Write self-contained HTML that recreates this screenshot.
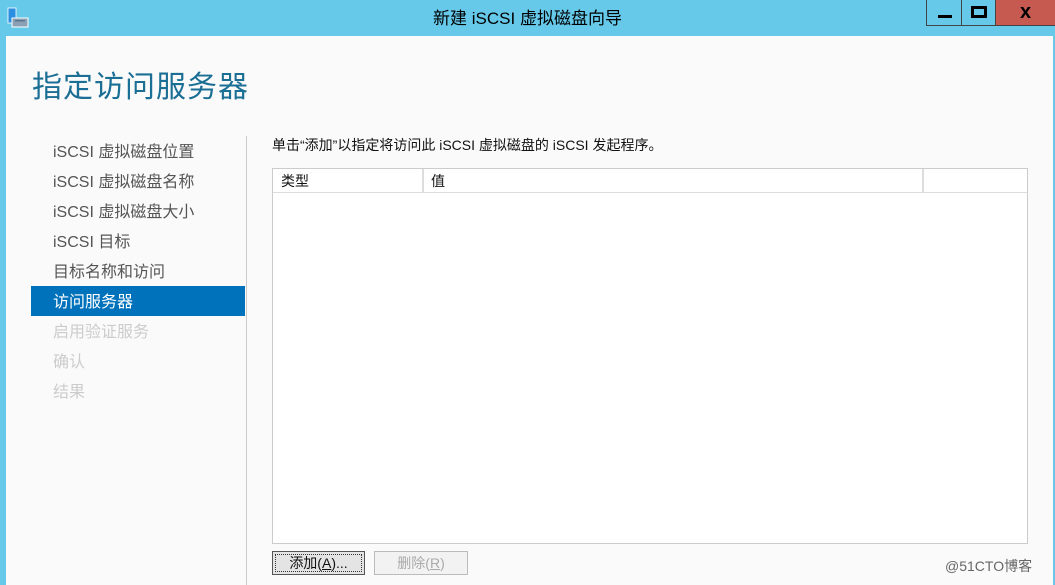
<!DOCTYPE html>
<html><head><meta charset="utf-8"><style>
*{margin:0;padding:0;box-sizing:border-box}
body{width:1055px;height:585px;background:#66c9ea;position:relative;overflow:hidden;font-family:"Liberation Sans","Noto Sans CJK SC",sans-serif}
.abs{position:absolute}
.title{left:0;width:1055px;top:4px;text-align:center;font-size:17px;color:#000}
.client{left:6px;top:36px;width:1047px;height:549px;background:#fafafa}
.nav{position:absolute;left:53px;font-size:16px;color:#555;white-space:nowrap}
.dis{color:#ccc}
</style></head><body>
<svg class="abs" style="left:7px;top:7px" width="22" height="22" viewBox="0 0 22 22">
<rect x="1" y="1" width="8" height="15" fill="#2a8fe0" stroke="#fff" stroke-width="0.8"/>
<rect x="5" y="11" width="16" height="9" fill="#8aa0b5" stroke="#fff" stroke-width="1"/>
<rect x="8" y="13" width="10" height="1.5" fill="#5f7488"/>
</svg>
<div class="abs title">新建 iSCSI 虚拟磁盘向导</div>
<div class="abs" style="left:926px;top:0;width:36px;height:26px;border:1px solid #444;border-top:none;background:#66c9ea"></div>
<div class="abs" style="left:938px;top:15px;width:14px;height:3px;background:#000"></div>
<div class="abs" style="left:962px;top:0;width:34px;height:26px;border:1px solid #444;border-top:none;border-left:none"></div>
<div class="abs" style="left:971px;top:6px;width:16px;height:12px;border:3px solid #000"></div>
<div class="abs" style="left:996px;top:0;width:59px;height:26px;background:#c75a50;border-bottom:1px solid #444"></div>
<div class="abs" style="left:996px;top:1px;width:59px;text-align:center;font-size:20px;font-weight:bold;color:#000">x</div>
<div class="abs client"></div>
<div class="abs" style="left:32px;top:62px;font-size:30px;color:#1b6e94;letter-spacing:1px">指定访问服务器</div>
<div class="abs" style="left:246px;top:136px;width:1px;height:449px;background:#ccc"></div>
<div class="abs" style="left:31px;top:286px;width:214px;height:30px;background:#0072bc"></div>
<div class="nav" style="top:138px">iSCSI 虚拟磁盘位置</div>
<div class="nav" style="top:168px">iSCSI 虚拟磁盘名称</div>
<div class="nav" style="top:198px">iSCSI 虚拟磁盘大小</div>
<div class="nav" style="top:228px">iSCSI 目标</div>
<div class="nav" style="top:258px">目标名称和访问</div>
<div class="nav" style="top:288px;color:#fff">访问服务器</div>
<div class="nav dis" style="top:318px">启用验证服务</div>
<div class="nav dis" style="top:348px">确认</div>
<div class="nav dis" style="top:378px">结果</div>
<div class="abs" style="left:272px;top:135px;font-size:14px;color:#111">单击“添加”以指定将访问此 iSCSI 虚拟磁盘的 iSCSI 发起程序。</div>
<div class="abs" style="left:272px;top:168px;width:756px;height:376px;background:#fff;border:1px solid #ccc"></div>
<div class="abs" style="left:273px;top:169px;width:754px;height:24px;border-bottom:1px solid #ddd"></div>
<div class="abs" style="left:422px;top:169px;width:2px;height:24px;background:#ddd"></div>
<div class="abs" style="left:922px;top:169px;width:2px;height:24px;background:#ddd"></div>
<div class="abs" style="left:281px;top:171px;font-size:14px;color:#111">类型</div>
<div class="abs" style="left:431px;top:171px;font-size:14px;color:#111">值</div>
<div class="abs" style="left:272px;top:551px;width:93px;height:24px;border:1px solid #555;background:#e4e4e4"></div>
<div class="abs" style="left:275px;top:554px;width:87px;height:18px;border:1px dotted #333"></div>
<div class="abs" style="left:272px;top:553px;width:93px;text-align:center;font-size:14px;color:#111">添加(<u>A</u>)...</div>
<div class="abs" style="left:374px;top:551px;width:94px;height:24px;border:1px solid #bbb;background:#f2f2f2"></div>
<div class="abs" style="left:374px;top:553px;width:94px;text-align:center;font-size:14px;color:#aaa">删除(<u>R</u>)</div>
<div class="abs" style="left:945px;top:556px;font-size:14px;color:#666">@51CTO博客</div>
</body></html>
